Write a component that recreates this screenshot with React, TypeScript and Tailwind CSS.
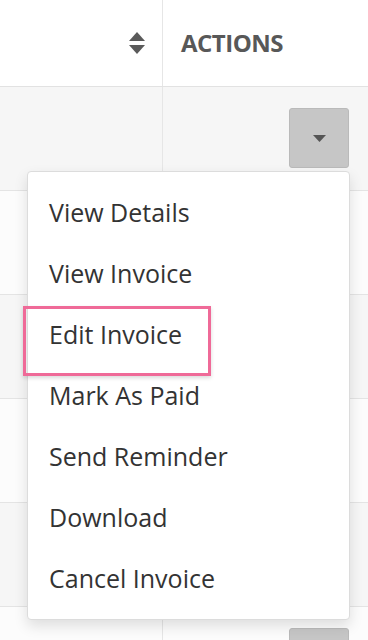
import React from 'react';

const items = ['View Details', 'View Invoice', 'Edit Invoice', 'Mark As Paid', 'Send Reminder', 'Download', 'Cancel Invoice'];

function Caret() {
  return (
    <svg width="13" height="7" viewBox="0 0 13 7">
      <path d="M0 0h13L6.5 7z" fill="#555" />
    </svg>
  );
}

function SortIcon() {
  return (
    <svg width="16" height="22" viewBox="0 0 16 22">
      <path d="M8 0L16 9H0z" fill="#5a5a5a" />
      <path d="M0 13h16L8 22z" fill="#5a5a5a" />
    </svg>
  );
}

function ActionButton() {
  return (
    <button className="w-[60px] h-[60px] rounded-[3px] bg-[#c6c6c6] border border-[#bababa] flex items-center justify-center">
      <Caret />
    </button>
  );
}

export default function App() {
  const rows = [0, 1, 2, 3, 4, 5];

  return (
    <div className="relative w-[368px] h-[640px] overflow-hidden bg-white" style={{ fontFamily: '"Open Sans", sans-serif' }}>
      {/* Header */}
      <div className="flex h-[87px] border-b border-[#e2e2e2] bg-white">
        <div className="w-[163px] flex items-center justify-end pr-[17px] border-r border-[#e6e6e6]">
          <SortIcon />
        </div>
        <div className="flex-1 flex items-center pl-[18px]">
          <span className="text-[24px] font-bold text-[#585858] tracking-[-0.5px]">ACTIONS</span>
        </div>
      </div>

      {/* Rows */}
      {rows.map((r) => (
        <div key={r} className={`flex h-[104px] border-b border-[#e4e4e4] ${r % 2 === 0 ? 'bg-[#f6f6f6]' : 'bg-[#fcfcfc]'}`}>
          <div className="w-[163px] border-r border-[#e6e6e6]" />
          <div className="flex-1 flex justify-end pr-[19px] pt-[21px]">
            <ActionButton />
          </div>
        </div>
      ))}

      {/* Dropdown menu */}
      <div className="absolute left-[27px] top-[171px] w-[323px] bg-white border border-[#dcdcdc] rounded-[4px] shadow-[0_6px_14px_rgba(0,0,0,0.12)] py-[10px]">
        {items.map((item) => (
          <div key={item} className="relative h-[61px] flex items-center pl-[21px] text-[25px] text-[#333333]">
            {item === 'Edit Invoice' && (
              <div className="absolute left-[-5px] top-[2px] w-[188px] h-[70px] border-[3px] border-[#ef6a98] shadow-[0_2px_4px_rgba(0,0,0,0.15)]" />
            )}
            <span className="relative">{item}</span>
          </div>
        ))}
      </div>
    </div>
  );
}
